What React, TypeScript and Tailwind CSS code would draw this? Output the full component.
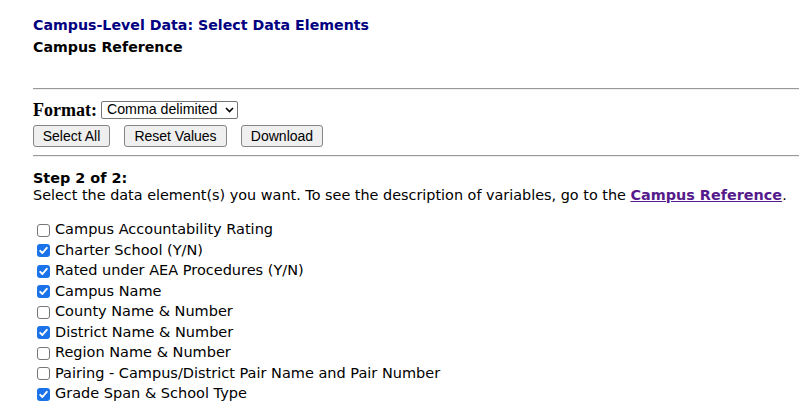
import React from "react";

const items: [string, boolean][] = [
  ["Campus Accountability Rating", false],
  ["Charter School (Y/N)", true],
  ["Rated under AEA Procedures (Y/N)", true],
  ["Campus Name", true],
  ["County Name & Number", false],
  ["District Name & Number", true],
  ["Region Name & Number", false],
  ["Pairing - Campus/District Pair Name and Pair Number", false],
  ["Grade Span & School Type", true],
];

function Box({ checked }: { checked: boolean }) {
  if (checked) {
    return (
      <span className="flex h-[13px] w-[13px] shrink-0 items-center justify-center rounded-[3px] bg-[#1a73e8]">
        <svg width="11" height="11" viewBox="0 0 11 11">
          <path d="M2.2 5.8 L4.4 8 L8.8 2.8" fill="none" stroke="white" strokeWidth="1.9" strokeLinecap="round" strokeLinejoin="round" />
        </svg>
      </span>
    );
  }
  return <span className="h-[13px] w-[13px] shrink-0 rounded-[3px] border border-[#767676] bg-white" />;
}

function Btn({ children, w }: { children: React.ReactNode; w: string }) {
  return (
    <span className={`flex h-[22px] items-center justify-center rounded-[3px] border border-[#858585] bg-[#efefef] text-[14px] text-black ${w}`} style={{ fontFamily: '"Liberation Sans", Arial, sans-serif' }}>
      {children}
    </span>
  );
}

export default function App() {
  return (
    <div className="min-h-[411px] w-[799px] overflow-hidden bg-white text-[14.4px] text-black" style={{ fontFamily: '"DejaVu Sans", Verdana, sans-serif' }}>
      <div className="pl-[33px] pt-[16px]">
        <div className="text-[14.2px] font-bold leading-[18px] text-[#000080]">Campus-Level Data: Select Data Elements</div>
        <div className="mt-[4px] text-[14.2px] font-bold leading-[18px]">Campus Reference</div>
        <div className="mt-[32px] h-[2px] border-t border-[#9a9a9a] border-b border-b-[#eeeeee]" />
        <div className="mt-[11px] flex h-[18px] items-center">
          <span className="mr-[4px] text-[18px] font-bold" style={{ fontFamily: '"Liberation Serif", "Times New Roman", serif' }}>Format:</span>
          <span className="flex h-[18px] w-[137px] items-center justify-between rounded-[2px] border border-[#767676] pl-[5px] pr-[3px] text-[14.2px]" style={{ fontFamily: '"Liberation Sans", Arial, sans-serif' }}>
            Comma delimited
            <svg width="9" height="6" viewBox="0 0 9 6"><path d="M1 1 L4.5 4.5 L8 1" fill="none" stroke="black" strokeWidth="1.6" /></svg>
          </span>
        </div>
        <div className="mt-[6px] flex gap-[14px]">
          <Btn w="w-[77px]">Select All</Btn>
          <Btn w="w-[103px]">Reset Values</Btn>
          <Btn w="w-[82px]">Download</Btn>
        </div>
        <div className="mt-[8px] h-[2px] border-t border-[#9a9a9a] border-b border-b-[#eeeeee]" />
        <div className="mt-[13px] text-[14.4px] font-bold leading-[16px]">Step 2 of 2:</div>
        <div className="mt-[1px] whitespace-nowrap leading-[17px]">
          Select the data element(s) you want. To see the description of variables, go to the{" "}
          <a className="font-bold text-[#551a8b] underline">Campus Reference</a>.
        </div>
        <div className="mt-[16px] flex flex-col pl-[4px]">
          {items.map(([label, c]) => (
            <div key={label} className="flex h-[20.5px] items-center gap-[5px]">
              <Box checked={c} />
              <span className="text-[14.5px]">{label}</span>
            </div>
          ))}
        </div>
      </div>
    </div>
  );
}
